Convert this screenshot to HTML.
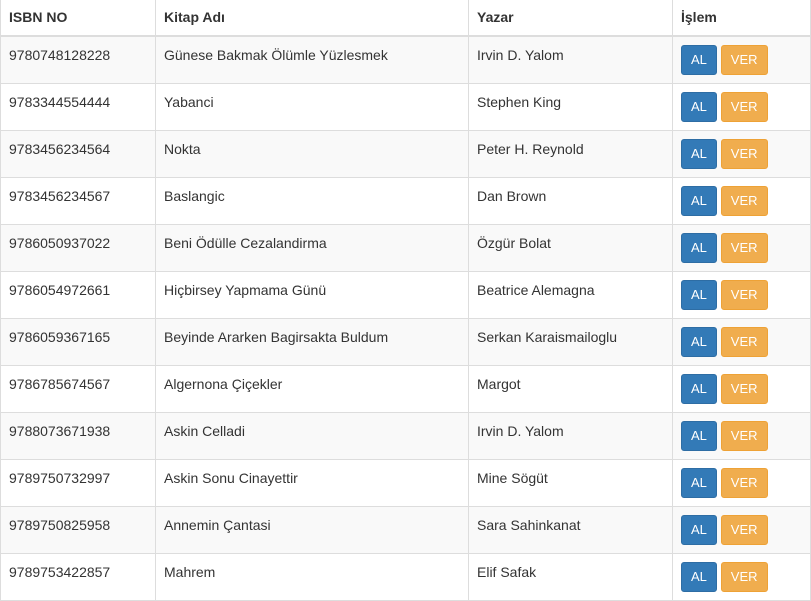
<!DOCTYPE html>
<html><head><meta charset="utf-8"><style>
body{margin:0;background:#fff;font-family:"Liberation Sans",Arial,sans-serif;font-size:14px;color:#333;}
table{border-collapse:collapse;width:810px;table-layout:fixed;}
th,td{padding:8px;line-height:20px;text-align:left;vertical-align:top;border:1px solid #ddd;}
th{border-top:0;border-bottom:2px solid #ddd;font-weight:bold;padding-top:7px;}
tbody tr:nth-child(odd){background:#f9f9f9;}
.b{display:inline-block;height:30px;box-sizing:border-box;padding:4px 9px;font-size:13px;line-height:20px;border-radius:3px;color:#fff;border:1px solid;}
.al{background:#337ab7;border-color:#2e6da4;}
.ver{background:#f0ad4e;border-color:#eea236;}
</style></head><body>
<table>
<colgroup><col style="width:155px"><col style="width:313px"><col style="width:204px"><col style="width:138px"></colgroup>
<thead><tr><th>ISBN NO</th><th>Kitap Adı</th><th>Yazar</th><th>İşlem</th></tr></thead>
<tbody>
<tr><td>9780748128228</td><td>Günese Bakmak Ölümle Yüzlesmek</td><td>Irvin D. Yalom</td><td><span class="b al">AL</span> <span class="b ver">VER</span></td></tr>
<tr><td>9783344554444</td><td>Yabanci</td><td>Stephen King</td><td><span class="b al">AL</span> <span class="b ver">VER</span></td></tr>
<tr><td>9783456234564</td><td>Nokta</td><td>Peter H. Reynold</td><td><span class="b al">AL</span> <span class="b ver">VER</span></td></tr>
<tr><td>9783456234567</td><td>Baslangic</td><td>Dan Brown</td><td><span class="b al">AL</span> <span class="b ver">VER</span></td></tr>
<tr><td>9786050937022</td><td>Beni Ödülle Cezalandirma</td><td>Özgür Bolat</td><td><span class="b al">AL</span> <span class="b ver">VER</span></td></tr>
<tr><td>9786054972661</td><td>Hiçbirsey Yapmama Günü</td><td>Beatrice Alemagna</td><td><span class="b al">AL</span> <span class="b ver">VER</span></td></tr>
<tr><td>9786059367165</td><td>Beyinde Ararken Bagirsakta Buldum</td><td>Serkan Karaismailoglu</td><td><span class="b al">AL</span> <span class="b ver">VER</span></td></tr>
<tr><td>9786785674567</td><td>Algernona Çiçekler</td><td>Margot</td><td><span class="b al">AL</span> <span class="b ver">VER</span></td></tr>
<tr><td>9788073671938</td><td>Askin Celladi</td><td>Irvin D. Yalom</td><td><span class="b al">AL</span> <span class="b ver">VER</span></td></tr>
<tr><td>9789750732997</td><td>Askin Sonu Cinayettir</td><td>Mine Sögüt</td><td><span class="b al">AL</span> <span class="b ver">VER</span></td></tr>
<tr><td>9789750825958</td><td>Annemin Çantasi</td><td>Sara Sahinkanat</td><td><span class="b al">AL</span> <span class="b ver">VER</span></td></tr>
<tr><td>9789753422857</td><td>Mahrem</td><td>Elif Safak</td><td><span class="b al">AL</span> <span class="b ver">VER</span></td></tr>
</tbody></table>
</body></html>
